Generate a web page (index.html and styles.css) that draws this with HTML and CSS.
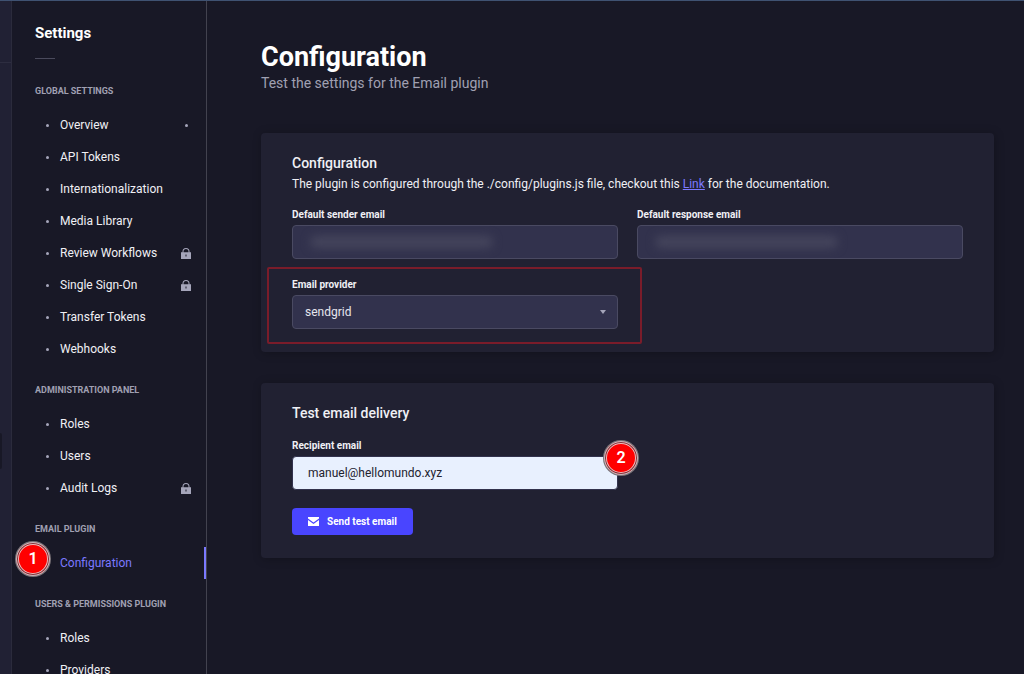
FILE: index.html
```html
<!DOCTYPE html>
<html lang="en">
<head>
<meta charset="utf-8">
<meta name="viewport" content="width=device-width, initial-scale=1">
<title>Settings - Configuration</title>
<link rel="stylesheet" href="styles.css">
</head>
<body>
<svg class="defs" aria-hidden="true">
  <symbol id="lock" viewBox="0 0 20 22"><path fill-rule="evenodd" d="M0 8.500h3V7a7 7 0 0 1 14 0v1.500h3V22H0zM5 8.500h10V7A5 5 0 0 0 5 7zM9 13v4h2v-4z"/></symbol>
</svg>
<div class="app">
  <div class="rail"><div class="rail-brand"></div><div class="rail-toggle"></div></div>
  <nav class="sidebar" aria-label="Settings">
    <h2 class="sidebar-title">Settings</h2>
    <hr class="sidebar-rule">
    <section class="group">
      <h3 class="group-title">GLOBAL SETTINGS</h3>
      <ul class="links">
        <li><a class="link" href="#">Overview<span class="notice"></span></a></li>
        <li><a class="link" href="#">API Tokens</a></li>
        <li><a class="link" href="#">Internationalization</a></li>
        <li><a class="link" href="#">Media Library</a></li>
        <li><a class="link" href="#">Review Workflows<svg class="lock"><use href="#lock"/></svg></a></li>
        <li><a class="link" href="#">Single Sign-On<svg class="lock"><use href="#lock"/></svg></a></li>
        <li><a class="link" href="#">Transfer Tokens</a></li>
        <li><a class="link" href="#">Webhooks</a></li>
      </ul>
    </section>
    <section class="group">
      <h3 class="group-title">ADMINISTRATION PANEL</h3>
      <ul class="links">
        <li><a class="link" href="#">Roles</a></li>
        <li><a class="link" href="#">Users</a></li>
        <li><a class="link" href="#">Audit Logs<svg class="lock"><use href="#lock"/></svg></a></li>
      </ul>
    </section>
    <section class="group">
      <h3 class="group-title">EMAIL PLUGIN</h3>
      <ul class="links">
        <li class="step-anchor"><a class="link link-active" href="#" aria-current="page">Configuration</a><span class="step step-nav">1</span></li>
      </ul>
    </section>
    <section class="group">
      <h3 class="group-title">USERS &amp; PERMISSIONS PLUGIN</h3>
      <ul class="links">
        <li><a class="link" href="#">Roles</a></li>
        <li><a class="link" href="#">Providers</a></li>
      </ul>
    </section>
  </nav>
  <main class="main">
    <header class="header">
      <h1 class="title">Configuration</h1>
      <p class="subtitle">Test the settings for the Email plugin</p>
    </header>
    <section class="card">
      <h2 class="card-title">Configuration</h2>
      <p class="card-text">The plugin is configured through the ./config/plugins.js file, checkout this <a class="doc-link" href="#">Link</a> for the documentation.</p>
      <div class="fields">
        <div class="field">
          <label class="label" for="sender">Default sender email</label>
          <div class="control"><input class="input" id="sender" type="email" readonly><span class="redacted"></span></div>
        </div>
        <div class="field">
          <label class="label" for="response">Default response email</label>
          <div class="control"><input class="input" id="response" type="email" readonly><span class="redacted"></span></div>
        </div>
        <div class="field field-marked">
          <label class="label" for="provider">Email provider</label>
          <div class="control">
            <select class="input select" id="provider"><option>sendgrid</option></select>
            <svg class="caret" viewBox="0 0 6 4" aria-hidden="true"><path d="M0 0h6L3 4z"/></svg>
          </div>
        </div>
      </div>
    </section>
    <section class="card">
      <h2 class="card-title">Test email delivery</h2>
      <form class="fields fields-test">
        <div class="field">
          <label class="label" for="recipient">Recipient email</label>
          <div class="control"><input class="input input-filled" id="recipient" type="email" value="manuel@hellomundo.xyz"><span class="step step-field">2</span></div>
        </div>
        <button class="send" type="button"><svg class="mail" viewBox="0 0 22 18" aria-hidden="true"><path d="M0 0h22v3L11 11 0 3zM0 6l11 8 11-8v12H0z"/></svg>Send test email</button>
      </form>
    </section>
  </main>
</div>
</body>
</html>
```
FILE: styles.css
```css
* { box-sizing: border-box; }
body, h1, h2, h3, p, ul { margin: 0; padding: 0; }
body {
  background: #181826;
  color: #f0f0f5;
  font-family: Roboto, "Liberation Sans", sans-serif;
  font-size: 12px;
  line-height: 20px;
}
.defs { display: none; }
.app {
  display: flex;
  height: 100vh;
  overflow: hidden;
  border-top: 1px solid #3f5272;
}
.rail {
  display: flex;
  flex-direction: column;
  flex: none;
  width: 12px;
  background: #212134;
  border-right: 1px solid #2b2b3c;
}
.rail-brand { height: 62px; border-bottom: 1px solid #2d2d40; }
.rail-toggle {
  width: 2px;
  height: 36px;
  margin-top: 370px;
  background: #181826;
  border-radius: 0 2px 2px 0;
}
.sidebar {
  flex: none;
  width: 195px;
  padding-top: 22px;
  border-right: 1px solid #42424f;
  overflow: hidden;
}
.sidebar-title { padding-left: 23px; font-size: 15px; font-weight: 700; color: #fff; }
.sidebar-rule {
  width: 20px;
  height: 1px;
  margin: 15px 0 24px 23px;
  border: 0;
  background: #4a4a5c;
}
.group { margin-bottom: 17px; }
.group-title {
  margin-bottom: 10px;
  padding-left: 23px;
  font-size: 9px;
  font-weight: 700;
  line-height: 16px;
  color: #a0a0b2;
}
.links { list-style: none; }
.link {
  display: flex;
  align-items: center;
  height: 32px;
  padding: 0 15px 0 34px;
  color: #f0f0f5;
  text-decoration: none;
}
.link::before {
  content: "";
  width: 3px;
  height: 3px;
  margin: 1px 11px 0 0;
  border-radius: 50%;
  background: #a5a5ba;
}
.link-active { color: #7b79ff; border-right: 2px solid #7b79ff; }
.link-active::before { visibility: hidden; }
.notice {
  width: 3px;
  height: 3px;
  margin: 1px 3px 0 auto;
  border-radius: 50%;
  background: #a5a5ba;
}
.lock { width: 10px; height: 11px; margin-left: auto; fill: #a5a5ba; }
.main { flex: 1; min-width: 0; padding: 39px 30px 30px 54px; }
.header { margin-bottom: 41px; }
.title { font-size: 27px; font-weight: 700; line-height: 34px; color: #fff; }
.subtitle { font-size: 14px; line-height: 18px; color: #a0a0b2; }
.card {
  margin-bottom: 31px;
  padding: 20px 31px 23px;
  background: #212132;
  border-radius: 4px;
  box-shadow: 1px 1px 10px rgba(3, 3, 5, 0.25);
}
.card-title { font-size: 14px; font-weight: 500; }
.card-text { margin-top: 1px; }
.doc-link { color: #7b79ff; }
.fields {
  display: grid;
  grid-template-columns: 1fr 1fr;
  gap: 18px 19px;
  margin-top: 13px;
}
.fields-test { margin-top: 15px; }
.field { position: relative; }
.label {
  display: block;
  margin-bottom: 2px;
  font-size: 10px;
  font-weight: 700;
  line-height: 16px;
}
.control { position: relative; }
.input {
  display: block;
  width: 100%;
  height: 34px;
  padding: 0 15px;
  border: 1px solid #4a4a62;
  border-radius: 4px;
  background: #32324d;
  color: #e6e6ee;
  font: inherit;
}
.select { appearance: none; padding: 0 12px; }
.caret {
  position: absolute;
  right: 12px;
  top: 15px;
  width: 6px;
  height: 4px;
  fill: #a5a5ba;
  pointer-events: none;
}
.redacted {
  position: absolute;
  left: 18px;
  top: 11px;
  width: 56%;
  height: 12px;
  border-radius: 6px;
  background: #45455c;
  filter: blur(5px);
}
.field-marked::after {
  content: "";
  position: absolute;
  inset: -10px -24px -15px -25px;
  border: 2px solid #7a1c2a;
  border-radius: 2px;
  pointer-events: none;
}
.input-filled { background: #e8f0fe; border-color: #32324d; color: #22222f; }
.send {
  grid-column: 1;
  justify-self: start;
  display: flex;
  align-items: center;
  gap: 8px;
  height: 27px;
  padding: 0 16px;
  border: 0;
  border-radius: 4px;
  background: #4945ff;
  color: #fff;
  font: 700 10px/16px Roboto, "Liberation Sans", sans-serif;
}
.mail { width: 11px; height: 9px; fill: #fff; }
.step-anchor { position: relative; }
.step {
  position: absolute;
  width: 34px;
  height: 34px;
  border: 1px solid #c9b9bd;
  border-radius: 50%;
  background: #f00;
  box-shadow: inset 0 0 0 1px #7c3038, inset 0 0 0 2px #f3b9b9, 0 0 0 1px #7a7378;
  color: #fff;
  font-size: 16px;
  font-weight: 600;
  line-height: 32px;
  text-align: center;
}
.step-nav { left: 4px; top: -5px; }
.step-field { right: -20px; top: -15px; }
```
